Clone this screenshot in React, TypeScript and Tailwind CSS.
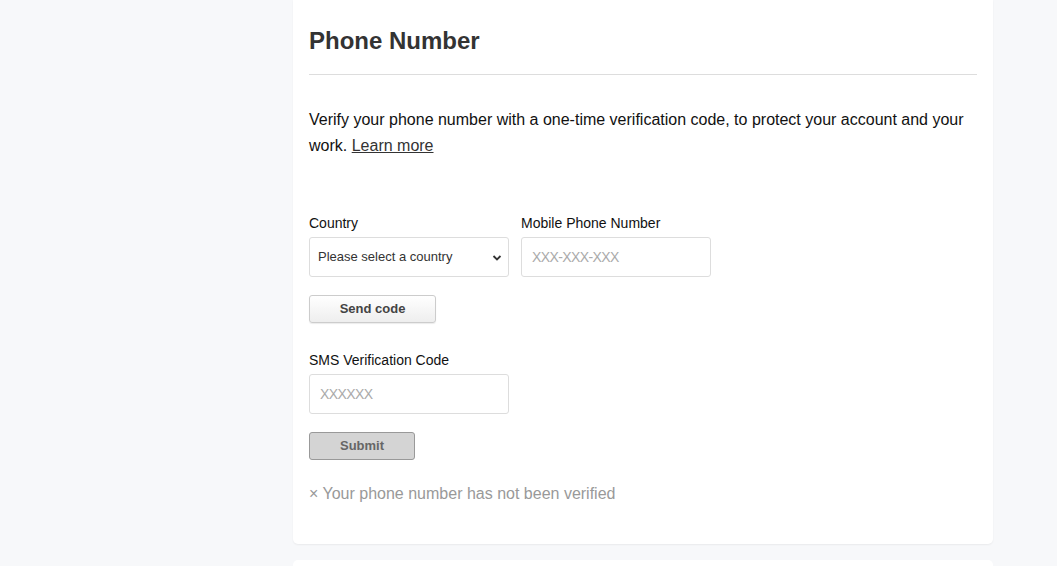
import React from "react";

export default function App() {
  return (
    <div className="min-h-[566px] w-full bg-[#f7f8fa] overflow-hidden" style={{ fontFamily: '"Liberation Sans", Arial, sans-serif' }}>
      <div className="ml-[293px] w-[700px]">
        <div className="bg-white rounded-b-[5px] shadow-[0_1px_2px_rgba(0,0,0,0.06)] px-4 pb-[38px]">
          <h2 className="pt-[26px] text-[24px] leading-[30px] font-bold text-[#333]">Phone Number</h2>
          <div className="mt-[18px] h-px bg-[#ddd]" />
          <p className="mt-[32px] text-[16px] leading-[26px] text-[#111]">
            Verify your phone number with a one-time verification code, to protect your account and your work.{" "}
            <a className="underline text-[#333]">Learn more</a>
          </p>
          <div className="mt-[54px] flex gap-3">
            <div className="flex flex-col">
              <label className="text-[14px] leading-[20px] text-[#111]">Country</label>
              <div className="mt-1 relative w-[200px] h-[40px] border border-[#ddd] rounded-[3px] bg-white flex items-center pl-2 pr-2">
                <span className="text-[13px] text-[#333]">Please select a country</span>
                <svg className="absolute right-[6px] top-[16px]" width="10" height="8" viewBox="0 0 10 8">
                  <path d="M1.5 2 L5 5.5 L8.5 2" fill="none" stroke="#333" strokeWidth="1.8" />
                </svg>
              </div>
            </div>
            <div className="flex flex-col">
              <label className="text-[14px] leading-[20px] text-[#111]">Mobile Phone Number</label>
              <div className="mt-1 w-[190px] h-[40px] border border-[#ddd] rounded-[3px] bg-white flex items-center pl-[10px]">
                <span className="text-[14px] tracking-[-0.6px] text-[#aaa]">XXX-XXX-XXX</span>
              </div>
            </div>
          </div>
          <button className="mt-[18px] w-[127px] h-[28px] border border-[#ccc] rounded-[3px] bg-gradient-to-b from-white to-[#eeeeee] shadow-[0_1px_1px_rgba(0,0,0,0.08)] text-[13px] font-bold text-[#444] flex items-center justify-center">
            Send code
          </button>
          <label className="block mt-[27px] text-[14px] leading-[20px] text-[#111]">SMS Verification Code</label>
          <div className="mt-1 w-[200px] h-[40px] border border-[#ddd] rounded-[3px] bg-white flex items-center pl-[10px]">
            <span className="text-[14px] tracking-[-0.6px] text-[#aaa]">XXXXXX</span>
          </div>
          <button className="mt-[18px] w-[106px] h-[28px] border border-[#999] rounded-[3px] bg-[#d4d4d4] text-[13px] font-bold text-[#666] flex items-center justify-center">
            Submit
          </button>
          <p className="mt-[22px] text-[16px] leading-[24px] text-[#999]">× Your phone number has not been verified</p>
        </div>
        <div className="mt-[16px] bg-white rounded-t-[5px] h-[6px]" />
      </div>
    </div>
  );
}
